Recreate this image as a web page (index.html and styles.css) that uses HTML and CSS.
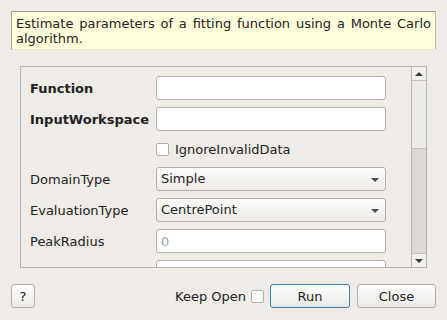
FILE: index.html
```html
<!DOCTYPE html>
<html lang="en">
<head>
    <meta charset="UTF-8">
    <title>EstimateFitParameters</title>
    <link rel="stylesheet" href="styles.css">
</head>
<body>
    <div class="dialog">
        <div class="summary">Estimate parameters of a fitting function using a Monte Carlo algorithm.</div>
        <div class="props">
            <div class="viewport">
                <div class="form">
                    <label class="name bold">Function</label>
                    <input class="field" type="text">
                    <label class="name bold">InputWorkspace</label>
                    <input class="field" type="text">
                    <div class="check-row">
                        <span class="box"></span>
                        <span>IgnoreInvalidData</span>
                    </div>
                    <label class="name">DomainType</label>
                    <div class="combo">Simple<span class="arrow"></span></div>
                    <label class="name">EvaluationType</label>
                    <div class="combo">CentrePoint<span class="arrow"></span></div>
                    <label class="name">PeakRadius</label>
                    <input class="field" type="text" placeholder="0">
                    <label class="name">Ranges</label>
                    <input class="field" type="text">
                </div>
            </div>
            <div class="scrollbar">
                <div class="sb-btn up"><span class="tri-up"></span></div>
                <div class="sb-thumb"></div>
                <div class="sb-track"></div>
                <div class="sb-btn down"><span class="tri-down"></span></div>
            </div>
        </div>
        <div class="buttons">
            <button class="btn help">?</button>
            <div class="spacer"></div>
            <span class="keep">Keep Open</span>
            <span class="box keep-box"></span>
            <button class="btn run">Run</button>
            <button class="btn close">Close</button>
        </div>
    </div>
</body>
</html>
```

FILE: styles.css
```css
body {
    margin: 0;
    background-color: #efebe7;
    font-family: "DejaVu Sans", sans-serif;
    font-size: 13px;
    color: #222;
}
.dialog {
    display: flex;
    flex-direction: column;
    height: 320px;
    box-sizing: border-box;
    padding: 11px 11px 12px 11px;
    overflow: hidden;
}
.summary {
    background-color: #ffffdc;
    border: 1px solid #a4a19d;
    border-bottom-color: #e4e2d0;
    border-right-color: #bdbab5;
    padding: 4px 4px 3px 4px;
    line-height: 15px;
    text-align: justify;
}
.props {
    flex: 1;
    display: flex;
    margin: 16px 9px 16px 9px;
    border: 1px solid #b8b4af;
    overflow: hidden;
    min-height: 0;
}
.viewport {
    flex: 1;
    overflow: hidden;
    padding: 9px 0 0 9px;
}
.form {
    display: grid;
    grid-template-columns: 126px 230px;
    row-gap: 7px;
    align-items: center;
}
.name {
    white-space: nowrap;
}
.bold {
    font-weight: bold;
}
.field {
    height: 24px;
    box-sizing: border-box;
    border: 1px solid #b4b0ab;
    border-radius: 3px;
    background-color: #fff;
    padding: 0 4px;
    margin: 0;
    font-family: "DejaVu Sans", sans-serif;
    font-size: 13px;
    color: #222;
    outline: none;
}
.field::placeholder {
    color: #a3a3a3;
}
.check-row {
    grid-column: 2;
    display: flex;
    align-items: center;
    height: 22px;
    gap: 6px;
}
.box {
    display: inline-block;
    width: 13px;
    height: 13px;
    box-sizing: border-box;
    border: 1px solid #b4b0ab;
    border-radius: 2px;
    background-color: #fff;
}
.combo {
    position: relative;
    height: 24px;
    box-sizing: border-box;
    border: 1px solid #b4b0ab;
    border-radius: 3px;
    background: linear-gradient(#fcfcfb, #ecebe8);
    padding: 0 4px;
    line-height: 22px;
}
.arrow {
    position: absolute;
    right: 6px;
    top: 10px;
    width: 0;
    height: 0;
    border-left: 4px solid transparent;
    border-right: 4px solid transparent;
    border-top: 4px solid #4d4d4d;
}
.scrollbar {
    width: 14px;
    border-left: 1px solid #b8b4af;
    display: flex;
    flex-direction: column;
}
.sb-btn {
    height: 13px;
    background-color: #f3f1ee;
    display: flex;
    align-items: center;
    justify-content: center;
}
.sb-btn.up {
    border-bottom: 1px solid #c4c0bb;
}
.sb-btn.down {
    border-top: 1px solid #c4c0bb;
}
.tri-up {
    width: 0;
    height: 0;
    border-left: 4px solid transparent;
    border-right: 4px solid transparent;
    border-bottom: 4px solid #3a3a3a;
}
.tri-down {
    width: 0;
    height: 0;
    border-left: 4px solid transparent;
    border-right: 4px solid transparent;
    border-top: 4px solid #3a3a3a;
}
.sb-thumb {
    height: 67px;
    background-color: #edebe8;
    border-bottom: 1px solid #c4c0bb;
}
.sb-track {
    flex: 1;
    background-color: #dddad6;
}
.buttons {
    display: flex;
    align-items: center;
    height: 24px;
}
.spacer {
    flex: 1;
}
.btn {
    height: 24px;
    box-sizing: border-box;
    border: 1px solid #b2aea9;
    border-radius: 3px;
    background: linear-gradient(#fdfdfc, #eceae7);
    font-family: "DejaVu Sans", sans-serif;
    font-size: 13px;
    color: #222;
    padding: 0;
}
.help {
    width: 24px;
}
.keep-box {
    margin-left: 5px;
}
.run {
    width: 80px;
    margin-left: 6px;
    border-color: #3b7fb0;
}
.close {
    width: 79px;
    margin-left: 7px;
}
```
